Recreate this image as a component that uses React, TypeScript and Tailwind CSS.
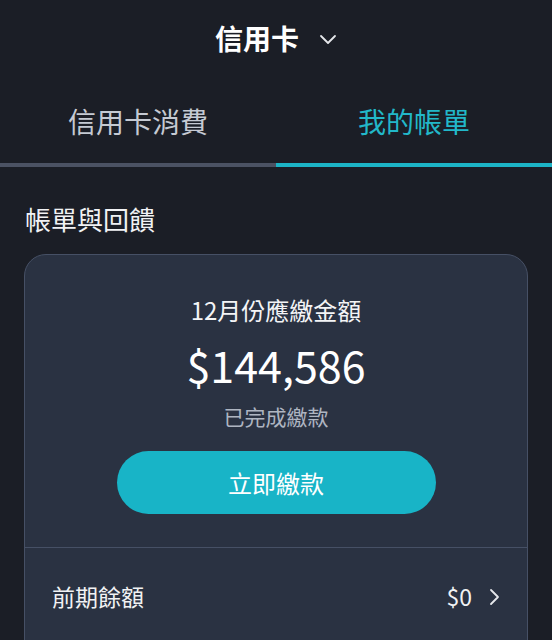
import React from "react";

export default function App() {
  const font = { fontFamily: '"Noto Sans CJK TC", "Noto Sans", sans-serif' };
  return (
    <div className="w-[552px] h-[640px] overflow-hidden bg-[#1b1e26] text-white" style={font}>
      {/* header */}
      <div className="h-[75px] flex items-center justify-center">
        <span className="text-[28px] font-bold leading-none">信用卡</span>
        <svg className="ml-[20px] mt-[2px]" width="18" height="12" viewBox="0 0 18 12" fill="none">
          <path d="M2 3l7 7 7-7" stroke="#e5e7eb" strokeWidth="1.8" strokeLinecap="round" strokeLinejoin="round" />
        </svg>
      </div>
      {/* tabs */}
      <div className="flex">
        <div className="flex-1 flex flex-col">
          <div className="h-[88px] flex items-center justify-center pt-[4px]">
            <span className="text-[28px] leading-none text-[#c5cad3]">信用卡消費</span>
          </div>
          <div className="h-[4px] bg-[#4b5263]" />
        </div>
        <div className="flex-1 flex flex-col">
          <div className="h-[88px] flex items-center justify-center pt-[4px]">
            <span className="text-[28px] leading-none text-[#22b8c9]">我的帳單</span>
          </div>
          <div className="h-[4px] bg-[#1cb4c6]" />
        </div>
      </div>
      {/* section title */}
      <div className="h-[87px] flex items-center px-[25px] pt-[16px]">
        <span className="text-[26px] leading-none text-[#f1f2f4]">帳單與回饋</span>
      </div>
      {/* card */}
      <div className="mx-[24px] rounded-[22px] border border-[#465065] bg-[#2a3242] overflow-hidden">
        <div className="flex flex-col items-center pt-[39px] pb-[33px]">
          <div className="h-[32px] flex items-center text-[24px] leading-none text-[#f3f4f6]">12月份應繳金額</div>
          <div className="h-[56px] mt-[10px] flex items-center text-[43px] leading-none text-white">$144,586</div>
          <div className="h-[28px] mt-[10px] flex items-center text-[21px] leading-none text-[#aeb5c1]">已完成繳款</div>
          <button className="mt-[21px] w-[319px] h-[63px] rounded-full bg-[#18b4c7] flex items-center justify-center">
            <span className="text-[24px] leading-none text-white">立即繳款</span>
          </button>
        </div>
        <div className="border-t border-[#465065] h-[120px] flex items-center justify-between pl-[27px] pr-[27px] pb-[22px]">
          <span className="text-[23px] leading-none text-[#f1f2f4]">前期餘額</span>
          <div className="flex items-center">
            <span className="text-[23px] leading-none text-[#f1f2f4]">$0</span>
            <svg className="ml-[16px]" width="12" height="18" viewBox="0 0 12 18" fill="none">
              <path d="M3 2l7 7-7 7" stroke="#e5e7eb" strokeWidth="1.8" strokeLinecap="round" strokeLinejoin="round" />
            </svg>
          </div>
        </div>
      </div>
    </div>
  );
}
